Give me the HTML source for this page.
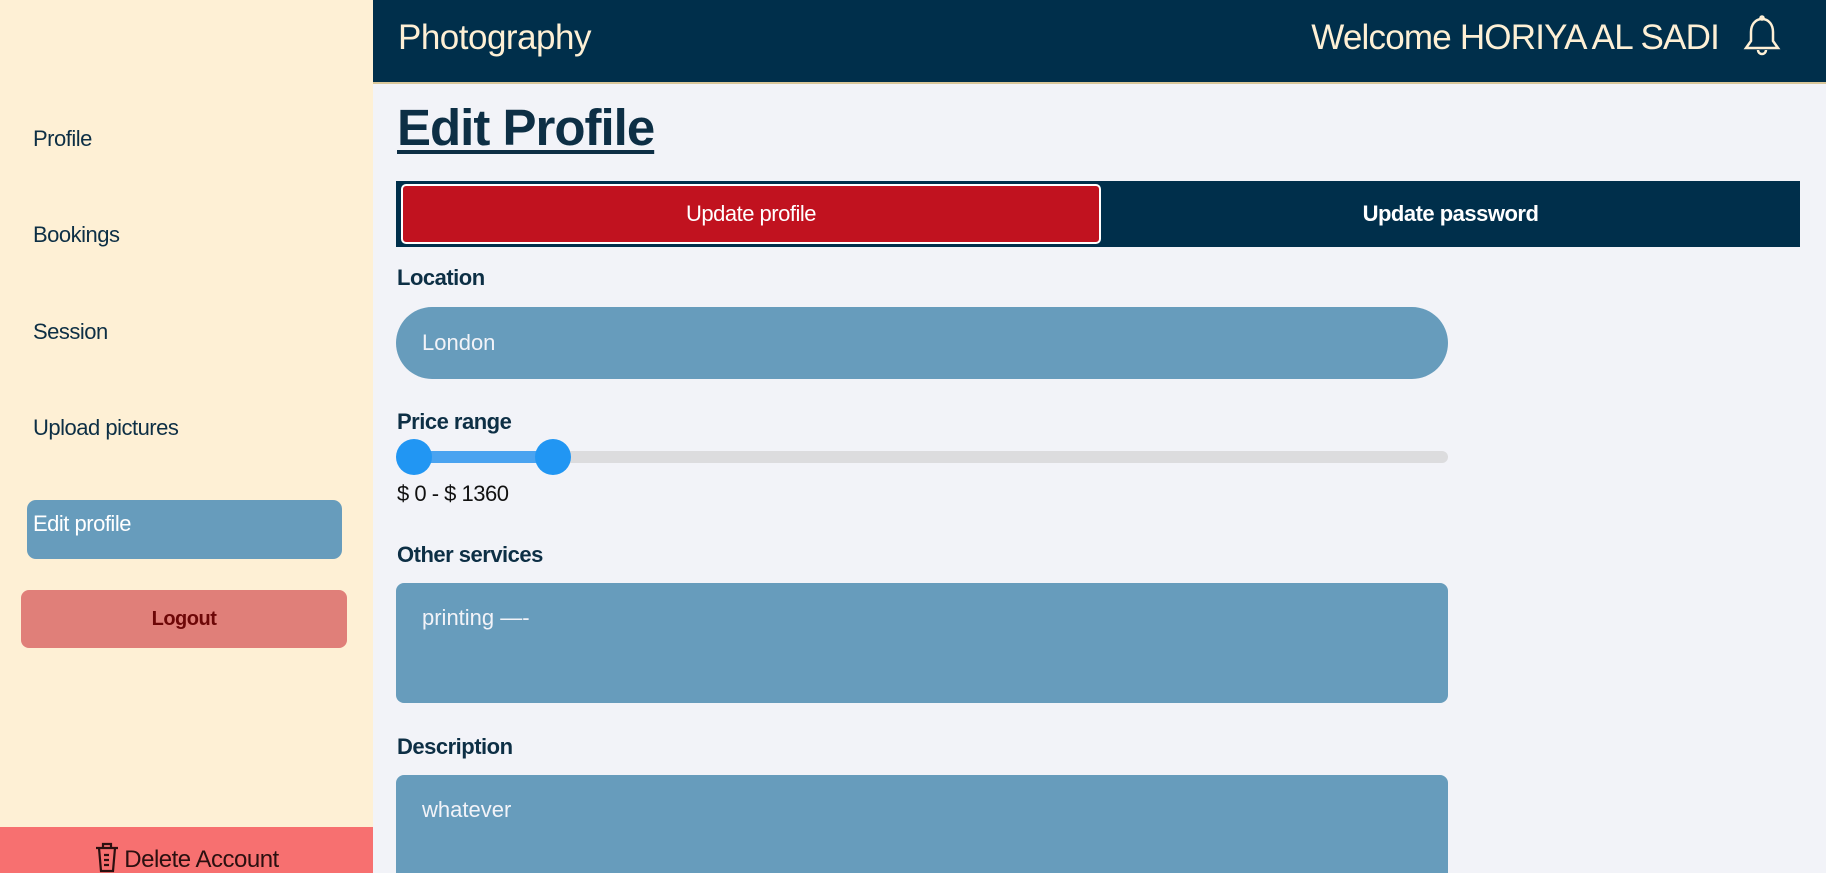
<!DOCTYPE html>
<html style="width:1826px;height:873px;overflow:hidden"><head><style>
*{margin:0;padding:0;box-sizing:border-box}
body{width:1826px;height:873px;overflow:hidden;font-family:"Liberation Sans",sans-serif;background:#f2f3f8;position:relative}
.side{position:absolute;left:0;top:0;width:373px;height:873px;background:#fef0d5}
.nav{position:absolute;left:33px;font-size:22px;color:#0d2f45;letter-spacing:-0.5px}
.edit{position:absolute;left:27px;top:500px;width:315px;height:59px;background:#679cbc;border-radius:9px}
.edit span{position:absolute;left:6px;top:11px;font-size:22px;color:#fff;letter-spacing:-0.5px}
.logout{position:absolute;left:21px;top:590px;width:326px;height:58px;background:#e07f79;border-radius:8px;text-align:center;line-height:58px;font-weight:bold;font-size:20px;color:#6d0707;letter-spacing:-0.5px}
.del{position:absolute;left:0;top:827px;width:373px;height:46px;background:#f77070;font-size:24px;color:#2b1010;text-align:center;padding-top:14px;letter-spacing:-0.5px}
.head{position:absolute;left:373px;top:0;width:1453px;height:84px;background:#002f4b;border-bottom:2px solid #d9c79a}
.head .t{position:absolute;left:25px;top:18px;font-size:35px;color:#fef0d5;letter-spacing:-0.5px}
.head .w{position:absolute;right:107px;top:18px;font-size:35px;color:#fef0d5;letter-spacing:-0.8px}
h1{position:absolute;left:397px;top:98px;font-size:51px;color:#0d2f45;text-decoration:underline;text-decoration-thickness:4px;text-underline-offset:5px;letter-spacing:-1px}
.tabs{position:absolute;left:396px;top:181px;width:1404px;height:66px;background:#002f4b}
.tab1{position:absolute;left:5px;top:3px;width:700px;height:60px;background:#c1121f;border:2px solid #fff;border-radius:5px;text-align:center;line-height:56px;color:#fff;font-size:22px;letter-spacing:-0.5px}
.tab2{position:absolute;left:705px;top:0;width:699px;height:66px;text-align:center;line-height:66px;color:#fff;font-size:22px;font-weight:bold;letter-spacing:-0.5px}
.lbl{position:absolute;left:397px;font-size:22px;font-weight:bold;color:#0d2f45;letter-spacing:-0.5px}
.inp{position:absolute;left:396px;width:1052px;background:#679cbc;color:#f2f3f8;font-size:22px;padding-left:26px}
</style></head><body>
<div class="side">
<div class="nav" style="top:126px">Profile</div>
<div class="nav" style="top:222px">Bookings</div>
<div class="nav" style="top:319px">Session</div>
<div class="nav" style="top:415px">Upload pictures</div>
<div class="edit"><span>Edit profile</span></div>
<div class="logout">Logout</div>
<div class="del"><svg width="26" height="32" viewBox="0 0 26 32" style="vertical-align:-6px;margin-right:4px" fill="none" stroke="#2b1010" stroke-width="2.2"><path d="M2 7h22M9 7V3h8v4M5 7l2 23h12l2-23M10 14h5M10 19h5M10 24h5"/></svg>Delete Account</div>
</div>
<div class="head"><div class="t">Photography</div><div class="w">Welcome HORIYA AL SADI</div>
<svg style="position:absolute;right:44px;top:15px" width="40" height="44" viewBox="0 0 40 44" fill="none" stroke="#fef0d5" stroke-width="2.5"><path d="M20 4c-7 0-11 6-11 13v9l-5 7h32l-5-7v-9c0-7-4-13-11-13z"/><path d="M16 35a4 4 0 0 0 8 0"/><circle cx="20" cy="3" r="1.5"/></svg></div>
<h1>Edit Profile</h1>
<div class="tabs"><div class="tab1">Update profile</div><div class="tab2">Update password</div></div>
<div class="lbl" style="top:265px">Location</div>
<div class="inp" style="top:307px;height:72px;border-radius:36px;line-height:72px">London</div>
<div class="lbl" style="top:409px">Price range</div>
<div style="position:absolute;left:396px;top:451px;width:1052px;height:12px;background:#dcdcde;border-radius:6px"></div>
<div style="position:absolute;left:414px;top:451px;width:139px;height:12px;background:#4aa3f0"></div>
<div style="position:absolute;left:396px;top:439px;width:36px;height:36px;border-radius:50%;background:#2196f3"></div>
<div style="position:absolute;left:535px;top:439px;width:36px;height:36px;border-radius:50%;background:#2196f3"></div>
<div style="position:absolute;left:397px;top:481px;font-size:22px;color:#111;letter-spacing:-0.5px">$ 0 - $ 1360</div>
<div class="lbl" style="top:542px">Other services</div>
<div class="inp" style="top:583px;height:120px;border-radius:8px;padding-top:22px">printing —-</div>
<div class="lbl" style="top:734px">Description</div>
<div class="inp" style="top:775px;height:98px;border-radius:8px 8px 0 0;padding-top:22px">whatever</div>
</body></html>
